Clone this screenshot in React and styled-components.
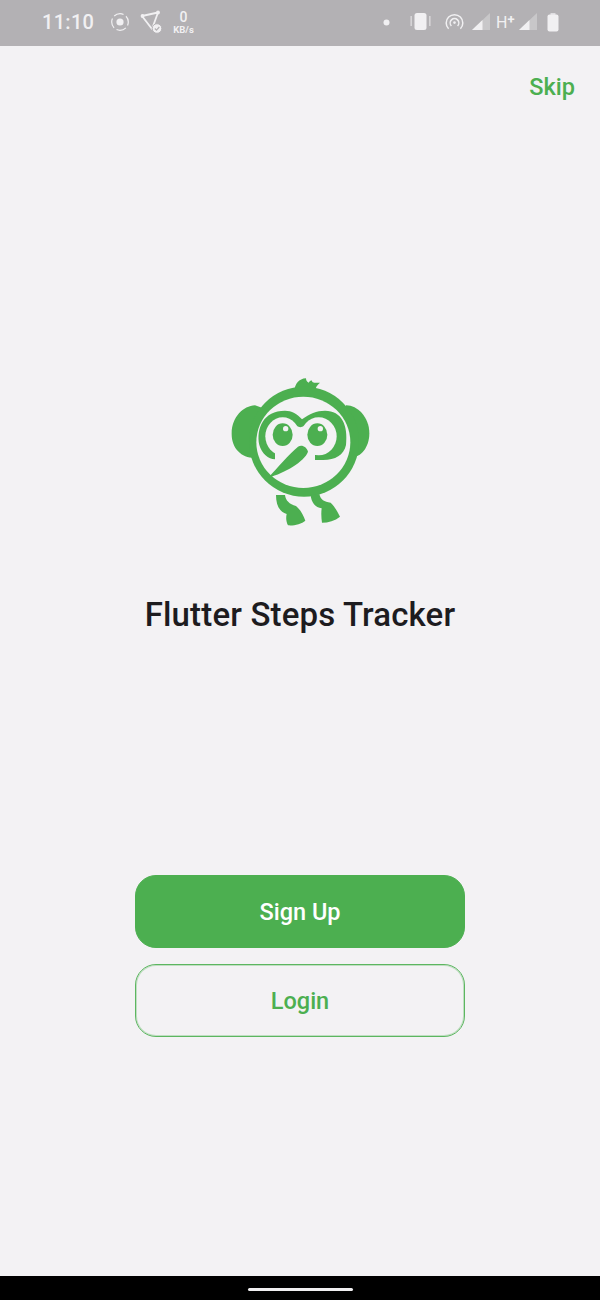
import React from "react"
import styled, { createGlobalStyle } from "styled-components"

const GREEN = "#4caf50"
const BG = "#f3f2f4"

const GlobalStyle = createGlobalStyle`
  html, body { margin: 0; padding: 0; background: ${BG}; }
  body { font-family: Roboto, "Liberation Sans", sans-serif; }
`

const Screen = styled.div`
  width: 600px;
  height: 1300px;
  display: flex;
  flex-direction: column;
  overflow: hidden;
  background: ${BG};
`

const StatusBar = styled.div`
  height: 46px;
  flex: none;
  display: flex;
  align-items: center;
  padding: 0 41px 2px 42px;
  background: #b3b1b4;
  color: #f1f0f2;
  box-sizing: border-box;
`

const Time = styled.span`
  font-size: 20px;
  font-weight: 500;
  letter-spacing: 0.3px;
  margin-right: 16px;
`

const StatusGroup = styled.div`
  display: flex;
  align-items: center;
`

const IconSlot = styled.span`
  display: flex;
  margin-left: ${p => p.$ml || 0}px;
`

const Speed = styled.div`
  display: flex;
  flex-direction: column;
  align-items: center;
  margin-left: 10px;
`

const SpeedValue = styled.span`
  font-size: 14px;
  font-weight: 500;
  line-height: 12px;
`

const SpeedUnit = styled.span`
  font-size: 9.5px;
  font-weight: 700;
  line-height: 9px;
  margin-top: 2px;
`

const NetType = styled.span`
  font-size: 16px;
  line-height: 1;
  width: 20px;
  margin-left: 6px;
`

const Plus = styled.span`
  font-size: 13px;
  font-weight: 700;
  vertical-align: 4px;
`

const Spacer = styled.div`
  flex: 1;
`

const Main = styled.main`
  flex: 1;
  display: flex;
  flex-direction: column;
  align-items: center;
`

const TopRow = styled.div`
  align-self: stretch;
  display: flex;
  justify-content: flex-end;
  padding: 27px 25px 0 0;
`

const SkipLink = styled.a`
  color: ${GREEN};
  font-size: 23.5px;
  font-weight: 500;
  line-height: 28px;
`

const LogoWrap = styled.div`
  margin-top: 269px;
  height: 165px;
`

const Title = styled.h1`
  margin: 61px 0 0;
  font-size: 33px;
  font-weight: 500;
  letter-spacing: 0.15px;
  line-height: 38px;
  color: #1d1c1f;
`

const Buttons = styled.div`
  margin-top: 241px;
  display: flex;
  flex-direction: column;
  gap: 16px;
`

const Button = styled.button`
  width: 330px;
  height: 73px;
  box-sizing: border-box;
  border-radius: 21px;
  border: 1px solid ${p => (p.$outline ? "#5cb660" : GREEN)};
  box-shadow: ${p => (p.$outline ? "inset 0 0 0 1px rgba(76, 175, 80, 0.3)" : "none")};
  background: ${p => (p.$outline ? "transparent" : GREEN)};
  color: ${p => (p.$outline ? GREEN : "#fff")};
  font-family: inherit;
  font-size: 23.5px;
  font-weight: 500;
  padding: 0;
`

const NavBar = styled.div`
  height: 24px;
  flex: none;
  display: flex;
  justify-content: center;
  padding-top: 12px;
  box-sizing: border-box;
  background: #000;
`

const HomeIndicator = styled.div`
  width: 105px;
  height: 3px;
  border-radius: 2px;
  background: #f0eff1;
`

const RecordIcon = () => (
  <svg width="20" height="20" viewBox="0 0 20 20" fill="none" stroke="currentColor">
    <circle cx="10" cy="10" r="8.3" strokeWidth="1.2" strokeDasharray="10 3" strokeDashoffset="6.5" />
    <circle cx="10" cy="10" r="3.6" fill="currentColor" stroke="none" />
  </svg>
)

const ShareIcon = () => (
  <svg width="24" height="24" viewBox="0 0 24 24" fill="none" stroke="currentColor">
    <path d="M3 6 L19 2.5 L13 19 Z" strokeWidth="1.8" strokeLinejoin="round" />
    <circle cx="3.5" cy="6" r="1.9" fill="currentColor" stroke="none" />
    <circle cx="19" cy="2.5" r="1.9" fill="currentColor" stroke="none" />
    <circle cx="18" cy="18.5" r="4.8" fill="currentColor" stroke="#b3b1b4" strokeWidth="1" />
    <path d="M15.8 18.5 L17.5 20.1 L20.3 17" stroke="#b3b1b4" strokeWidth="1.2" />
  </svg>
)

const DotIcon = () => (
  <svg width="7" height="7" viewBox="0 0 7 7" fill="currentColor">
    <circle cx="3.5" cy="3.5" r="3" />
  </svg>
)

const VibrateIcon = () => (
  <svg width="21" height="20" viewBox="0 0 21 20" fill="currentColor">
    <rect x="4.5" y="1" width="12" height="17" rx="2.5" />
    <rect x="0.5" y="4" width="1.3" height="10" opacity="0.7" />
    <rect x="19.2" y="4" width="1.3" height="10" opacity="0.7" />
  </svg>
)

const HotspotIcon = () => (
  <svg width="19" height="18" viewBox="0 0 19 18" fill="none" stroke="currentColor" strokeWidth="1.5">
    <path d="M3.6 15.8 A8.3 8.3 0 1 1 15.4 15.8" />
    <path d="M6.4 12.9 A4.3 4.3 0 1 1 12.6 12.9" />
    <circle cx="9.5" cy="9.6" r="1.3" fill="currentColor" stroke="none" />
  </svg>
)

const SignalIcon = () => (
  <svg width="18" height="18" viewBox="0 0 18 18" fill="currentColor">
    <path d="M0 17 L18 0 V17 Z" opacity="0.35" />
    <path d="M0 17 L10.5 7 V17 Z" />
  </svg>
)

const BatteryIcon = () => (
  <svg width="12" height="19" viewBox="0 0 12 19" fill="currentColor">
    <rect x="3.5" y="0" width="5" height="2.5" opacity="0.7" />
    <rect x="0.5" y="1.5" width="11" height="17" rx="2" />
  </svg>
)

const Logo = () => (
  <svg width="160" height="165" viewBox="0 0 480 495">
    <g fill={GREEN}>
      <path d="M105 106 C70 108 36 140 35 190 C34 235 65 265 105 264 L140 200 L130 115 Z" />
      <path d="M378 106 C410 105 448 140 448 190 C448 235 420 263 395 262 L360 200 Z" />
      <path d="M222 62 C226 42 236 26 258 25 C258 30 260 36 266 38 C268 34 272 30 276 32 C276 36 280 40 300 38 C292 44 286 52 284 66 Z" />
      <ellipse cx="252" cy="215" rx="165" ry="165" />
    </g>
    <ellipse cx="250" cy="217" rx="141" ry="137" fill={BG} />
    <path
      d="M118 225 C108 175 130 122 195 122 C215 122 232 132 246 148 C268 132 290 122 315 122 C365 122 385 165 378 225 C372 255 345 270 310 270 L285 270 L285 210 L165 210 L165 268 C145 268 125 250 118 225 Z"
      fill={GREEN}
    />
    <ellipse cx="188" cy="199" rx="52" ry="57" fill={BG} />
    <ellipse cx="296" cy="199" rx="54" ry="57" fill={BG} />
    <path d="M228 168 L241 172 L254 168 L254 240 L228 240 Z" fill={BG} />
    <path d="M165 235 L285 235 L285 275 L165 275 Z" fill={BG} />
    <g fill={GREEN}>
      <ellipse cx="188" cy="194" rx="30" ry="34" />
      <ellipse cx="292" cy="194" rx="30" ry="34" />
      <path d="M145 323 C175 290 205 255 234 230 C245 223 260 230 264 245 C252 276 195 308 145 323 Z" />
      <path d="M168 375 C168 405 178 425 200 432 C197 445 199 456 204 466 C220 468 245 462 256 452 C250 435 242 420 228 408 C208 402 197 392 195 375 Z" />
      <path d="M272 375 C274 398 286 412 305 415 C303 430 304 445 306 458 C325 458 345 452 360 440 C352 425 345 410 332 398 C312 395 302 390 298 372 Z" />
    </g>
    <circle cx="197" cy="176" r="8" fill={BG} />
    <circle cx="301" cy="176" r="8" fill={BG} />
  </svg>
)

const App = () => (
  <>
    <GlobalStyle />
    <Screen>
      <StatusBar>
        <Time>11:10</Time>
        <StatusGroup>
          <RecordIcon />
          <IconSlot $ml={9}><ShareIcon /></IconSlot>
          <Speed>
            <SpeedValue>0</SpeedValue>
            <SpeedUnit>KB/s</SpeedUnit>
          </Speed>
        </StatusGroup>
        <Spacer />
        <StatusGroup>
          <DotIcon />
          <IconSlot $ml={20}><VibrateIcon /></IconSlot>
          <IconSlot $ml={14}><HotspotIcon /></IconSlot>
          <IconSlot $ml={8}><SignalIcon /></IconSlot>
          <NetType>H<Plus>+</Plus></NetType>
          <IconSlot $ml={3}><SignalIcon /></IconSlot>
          <IconSlot $ml={10}><BatteryIcon /></IconSlot>
        </StatusGroup>
      </StatusBar>
      <Main>
        <TopRow>
          <SkipLink>Skip</SkipLink>
        </TopRow>
        <LogoWrap>
          <Logo />
        </LogoWrap>
        <Title>Flutter Steps Tracker</Title>
        <Buttons>
          <Button>Sign Up</Button>
          <Button $outline>Login</Button>
        </Buttons>
      </Main>
      <NavBar>
        <HomeIndicator />
      </NavBar>
    </Screen>
  </>
)

export default App
